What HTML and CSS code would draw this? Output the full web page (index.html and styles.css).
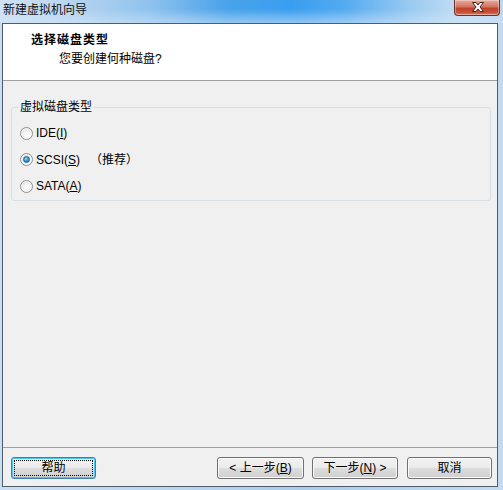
FILE: index.html
```html
<!DOCTYPE html>
<html lang="zh">
<head>
<meta charset="utf-8">
<title>新建虚拟机向导</title>
<link rel="stylesheet" href="styles.css">
</head>
<body>
<div class="window">
  <div class="titlebar">
    <span class="title">新建虚拟机向导</span>
    <div class="close">
      <svg width="46" height="16" viewBox="0 0 46 16">
        <path d="M17.5 3.5 L21 3.5 L23 6 L25 3.5 L28.5 3.5 L25 8 L28.5 12.5 L25 12.5 L23 10 L21 12.5 L17.5 12.5 L21 8 Z" fill="#ffffff" stroke="#4a2020" stroke-width="1" stroke-linejoin="round"/>
      </svg>
    </div>
  </div>
  <div class="client">
    <div class="header">
      <div class="h-title">选择磁盘类型</div>
      <div class="h-sub">您要创建何种磁盘?</div>
    </div>
    <div class="body">
      <fieldset class="group">
        <legend class="group-label">虚拟磁盘类型</legend>
        <label class="radio-row first"><span class="radio"></span><span class="rlabel">IDE(<u>I</u>)</span></label>
        <label class="radio-row"><span class="radio checked"></span><span class="rlabel">SCSI(<u>S</u>)</span><span class="rec">（推荐）</span></label>
        <label class="radio-row"><span class="radio"></span><span class="rlabel">SATA(<u>A</u>)</span></label>
      </fieldset>
    </div>
    <div class="footer">
      <button class="btn help"><span class="focus">帮助</span></button>
      <div class="spacer"></div>
      <button class="btn back">&lt; 上一步(<u>B</u>)</button>
      <button class="btn next">下一步(<u>N</u>) &gt;</button>
      <button class="btn cancel">取消</button>
    </div>
  </div>
</div>
</body>
</html>
```

FILE: styles.css
```css
* { box-sizing: border-box; }
html, body { margin: 0; padding: 0; }
body {
  width: 503px;
  height: 490px;
  overflow: hidden;
  font-family: "Liberation Sans", "Noto Sans CJK SC", sans-serif;
  font-size: 12px;
  color: #000;
}
.window {
  width: 503px;
  height: 490px;
  display: flex;
  flex-direction: column;
  background: linear-gradient(90deg, #c9def2 0%, #b7d4ef 40%, #a9cdee 60%, #c3dbf1 100%);
}
.titlebar {
  height: 23px;
  display: flex;
  align-items: flex-start;
  justify-content: space-between;
  background:
    linear-gradient(180deg, rgba(255,255,255,0) 40%, rgba(210,230,248,0.55) 100%),
    linear-gradient(90deg, #cfe2f4 0%, #bcd7f0 12%, #8fc2ee 30%, #49a3ea 45%, #3a9ef0 58%, #52aaf0 68%, #9ccbf1 82%, #c6def3 92%, #bdd7ef 100%);
}
.title {
  margin: 3px 0 0 3px;
  font-size: 12px;
  line-height: 15px;
  color: #111;
}
.close {
  width: 46px;
  height: 16px;
  margin-right: 3px;
  border: 1px solid #6a3228;
  border-top: none;
  border-radius: 0 0 4px 4px;
  background: linear-gradient(180deg, #e9a99b 0%, #d27562 45%, #c2402a 55%, #c9543c 85%, #d98672 100%);
  box-shadow: inset 0 0 0 1px rgba(255,255,255,0.35);
}
.close svg { display: block; margin-top: -1px; }
.client {
  margin: 0 5px 3px 2px;
  flex: 1;
  display: flex;
  flex-direction: column;
  border: 1px solid #4f5d6b;
  background: #f0f0f0;
}
.header {
  height: 57px;
  background: #ffffff;
  border-bottom: 1px solid #a0a0a0;
  padding: 9px 0 0 28px;
}
.h-title {
  font-weight: bold;
  line-height: 14px;
  letter-spacing: 1px;
}
.h-sub {
  margin: 5px 0 0 28px;
  line-height: 14px;
}
.body {
  flex: 1;
  padding: 19px 6px 0 8px;
}
.group {
  margin: 0;
  padding: 3px 0 0 8px;
  border: 1px solid #d5dfe5;
  border-radius: 3px;
  height: 101px;
}
.group-label {
  padding: 0 1px;
  margin-left: -1px;
  line-height: 14px;
}
.radio-row {
  display: flex;
  align-items: center;
  height: 26.5px;
}
.radio-row.first { margin-top: 3px; }
.radio {
  width: 13px;
  height: 13px;
  border-radius: 50%;
  border: 1px solid #8e8f8f;
  background: radial-gradient(circle at 60% 65%, #ffffff 0%, #f4f4f4 40%, #d2d2d2 100%);
  box-shadow: inset 0 0 0 1px #f8f8f8;
  margin-right: 3px;
  flex: none;
  display: flex;
  align-items: center;
  justify-content: center;
}
.radio.checked::after {
  content: "";
  width: 7px;
  height: 7px;
  border-radius: 50%;
  background: radial-gradient(circle at 40% 35%, #a9e0fb 0%, #3aa3de 40%, #0b5f95 100%);
  border: 1px solid #1d5f8a;
  box-sizing: border-box;
}
.rlabel { line-height: 14px; }
.rec { margin-left: 10px; line-height: 14px; }
u { text-decoration: underline; text-underline-offset: 1px; }
.footer {
  height: 39px;
  border-top: 1px solid #a0a0a0;
  display: flex;
  align-items: flex-start;
  padding: 9px 5px 0 8px;
}
.spacer { flex: 1; }
.btn {
  height: 22px;
  width: 85px;
  padding: 0;
  margin: 0;
  font: inherit;
  color: #000;
  border: 1px solid #707070;
  border-radius: 3px;
  background: linear-gradient(180deg, #f2f2f2 0%, #ebebeb 48%, #dddddd 52%, #cfcfcf 100%);
  box-shadow: inset 0 0 0 1px #fbfbfb;
  line-height: 18px;
  text-align: center;
}
.back { width: 87px; margin-right: 8px; }
.next { width: 86px; margin-right: 9px; }
.cancel { width: 85px; }
.help {
  width: 85px;
  border-color: #3c7fb1;
  box-shadow: inset 0 0 0 1px #48c6f5;
  padding: 2px;
}
.help .focus {
  display: block;
  height: 16px;
  line-height: 14px;
  border: 1px dotted #000;
}
```
